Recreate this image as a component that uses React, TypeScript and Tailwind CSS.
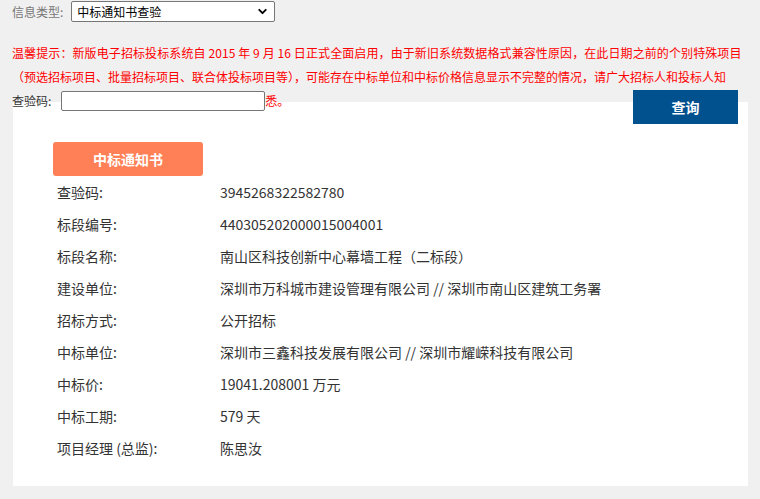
import { ChevronDown } from 'lucide-react';

const rows: [string, string][] = [
  ['查验码:', '3945268322582780'],
  ['标段编号:', '440305202000015004001'],
  ['标段名称:', '南山区科技创新中心幕墙工程（二标段）'],
  ['建设单位:', '深圳市万科城市建设管理有限公司 // 深圳市南山区建筑工务署'],
  ['招标方式:', '公开招标'],
  ['中标单位:', '深圳市三鑫科技发展有限公司 // 深圳市耀嵘科技有限公司'],
  ['中标价:', '19041.208001 万元'],
  ['中标工期:', '579 天'],
  ['项目经理 (总监):', '陈思汝'],
];

export default function App() {
  return (
    <div className="relative h-[499px] w-[760px] overflow-hidden bg-[#f0f0f0] font-['Noto_Sans_CJK_SC',sans-serif]">
      <div className="flex h-[22px] items-center pl-3 pt-px">
        <span className="text-[12px] leading-none text-[#777]">信息类型:</span>
        <div className="ml-[8px] flex h-[21px] w-[204px] items-center justify-between rounded-[2px] border border-[#767676] bg-white pl-[5px] pr-[5px]">
          <span className="text-[12px] leading-none text-black">中标通知书查验</span>
          <ChevronDown size={13} strokeWidth={3.5} className="text-black" />
        </div>
      </div>

      <div className="mt-[19px] pl-3 text-[12px] text-[#ff0000]">
        <p className="h-[24px] whitespace-nowrap leading-[24px] tracking-[0.1px]">
          温馨提示：新版电子招标投标系统自 2015 年 9 月 16 日正式全面启用，由于新旧系统数据格式兼容性原因，在此日期之前的个别特殊项目
        </p>
        <p className="h-[24px] whitespace-nowrap leading-[24px]">
          （预选招标项目、批量招标项目、联合体投标项目等），可能存在中标单位和中标价格信息显示不完整的情况，请广大招标人和投标人知
        </p>
        <div className="relative z-10 flex h-[24px] items-center">
          <span className="text-[#333]">查验码:</span>
          <div className="ml-[10px] h-[20px] w-[204px] rounded-[2px] border border-[#767676] bg-white" />
          <span>悉。</span>
        </div>
      </div>

      <div className="relative -mt-[11px] ml-[13px] w-[735px] bg-white pb-[21px] pl-[40px] pt-[40px]">
        <button className="absolute right-[10px] top-[-12px] h-[34px] w-[105px] bg-[#01518f] text-[14px] font-bold text-white">
          查询
        </button>
        <div className="flex h-[34px] w-[150px] items-center justify-center rounded-[3px] bg-[#ff7f56] text-[14px] font-bold text-white">
          中标通知书
        </div>
        <div className="pl-[4px] text-[14px] text-[#333]">
          {rows.map(([label, value]) => (
            <div key={label} className="flex h-[32.1px] items-center">
              <span className="w-[163px] shrink-0">{label}</span>
              <span>{value.replace(' // ', '\u00a0//\u00a0')}</span>
            </div>
          ))}
        </div>
      </div>
    </div>
  );
}
